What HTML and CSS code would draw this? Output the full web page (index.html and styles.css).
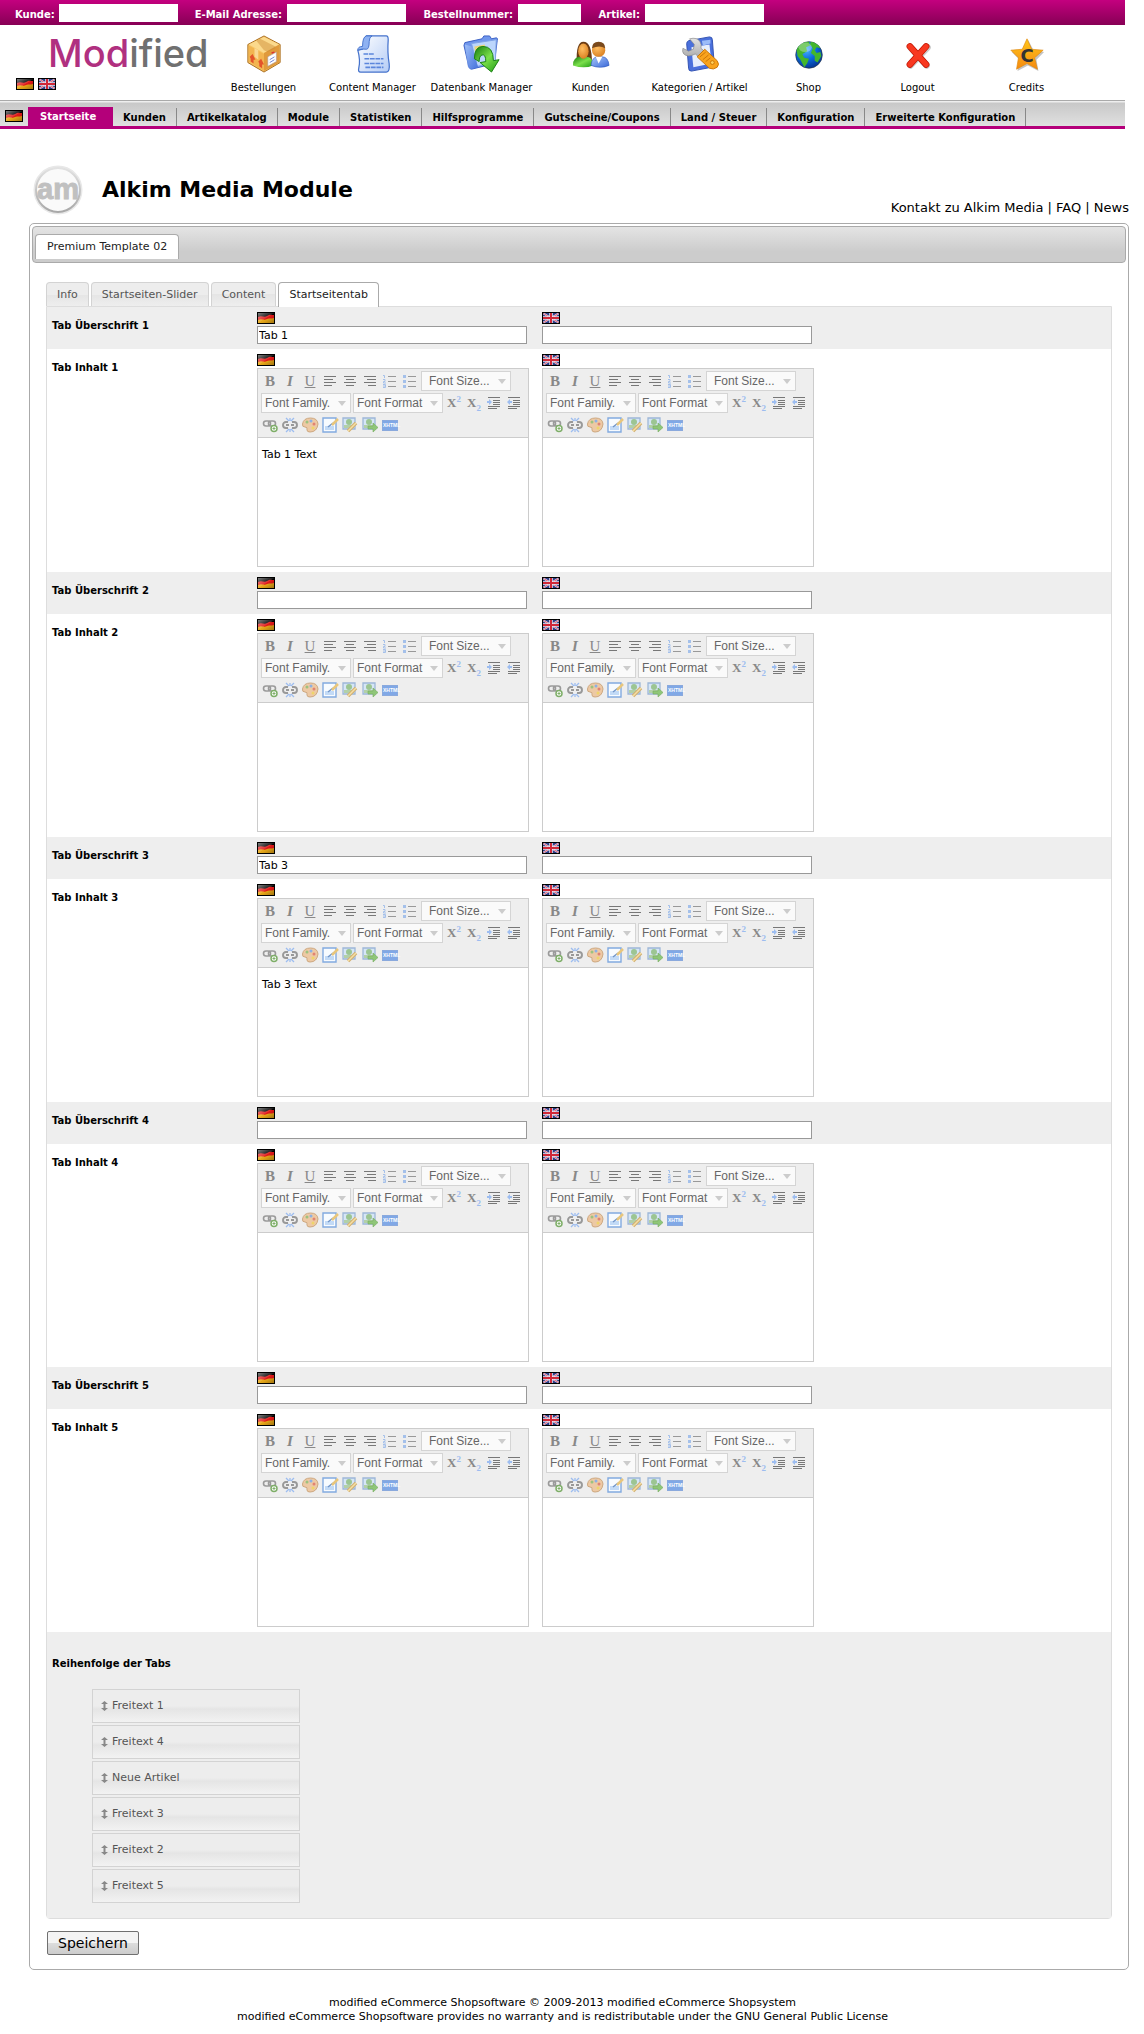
FILE: index.html
```html
<!DOCTYPE html>
<html lang="de">
<head>
<meta charset="utf-8">
<meta name="viewport" content="width=device-width, initial-scale=1">
<title>Alkim Media Module</title>
<link rel="stylesheet" href="styles.css">
</head>
<body>
<svg class="sprite" aria-hidden="true">
  <defs>
    <linearGradient id="gloss" x1="0" y1="0" x2="1" y2="1"><stop offset="0" stop-color="#fff" stop-opacity=".5"/><stop offset=".5" stop-color="#fff" stop-opacity=".1"/><stop offset=".55" stop-color="#000" stop-opacity="0"/><stop offset="1" stop-color="#000" stop-opacity=".3"/></linearGradient>
    <linearGradient id="blue" x1="0" y1="0" x2="1" y2="1"><stop offset="0" stop-color="#a9c8fa"/><stop offset="1" stop-color="#3a68d8"/></linearGradient>
    <linearGradient id="paper" x1="0" y1="0" x2="1" y2="1"><stop offset="0" stop-color="#fff"/><stop offset="1" stop-color="#b4ccf6"/></linearGradient>
    <linearGradient id="green" x1="0" y1="0" x2="1" y2="1"><stop offset="0" stop-color="#167a0c"/><stop offset=".5" stop-color="#7be04c"/><stop offset="1" stop-color="#1f9a14"/></linearGradient>
    <linearGradient id="gold" x1="0" y1="0" x2="0" y2="1"><stop offset="0" stop-color="#ffc61a"/><stop offset="1" stop-color="#f58a10"/></linearGradient>
    <radialGradient id="skin" cx=".4" cy=".35" r=".7"><stop offset="0" stop-color="#ffbe62"/><stop offset="1" stop-color="#d97f20"/></radialGradient>
    <radialGradient id="sea" cx=".4" cy=".3" r=".75"><stop offset="0" stop-color="#4db4ff"/><stop offset=".5" stop-color="#0a6adb"/><stop offset="1" stop-color="#06308e"/></radialGradient>
    <linearGradient id="red" x1="0" y1="0" x2="0" y2="1"><stop offset="0" stop-color="#ff6040"/><stop offset="1" stop-color="#d81400"/></linearGradient>
    <linearGradient id="silver" x1="0" y1="0" x2="0" y2="1"><stop offset="0" stop-color="#e2e2e2"/><stop offset="1" stop-color="#a8a8a8"/></linearGradient>
  </defs>
  <symbol id="flag-de" viewBox="0 0 18 12"><path fill="#000" d="M0 0h18v12H0z"/><path fill="#e01818" d="M1 5c4-2 6 1 9-1s4-1 7-1v5H1z"/><path fill="#e8a818" d="M1 8c4-2 6 1 9-1 3-1 4 0 7-1v5H1z"/><path fill="url(#gloss)" d="M1 1h16v10H1z"/></symbol>
  <symbol id="flag-gb" viewBox="0 0 18 12"><path fill="#000" d="M0 0h18v12H0z"/><path fill="#2c3c84" d="M1 1h16v10H1z"/><path stroke="#eef" stroke-width="2" d="M1.500 1.500l15 9M16.500 1.500l-15 9"/><path stroke="#d34" stroke-width=".8" d="M1.500 1.500l15 9M16.500 1.500l-15 9"/><path stroke="#e8e8f4" stroke-width="3.500" d="M9 1v10M1 6h16"/><path stroke="#d02838" stroke-width="2" d="M9 1v10M1 6h16"/></symbol>

  <symbol id="i-box" viewBox="0 0 38 40"><path fill="#f7c565" stroke="#a86a1c" d="M19 1l17 9v19L19 39 2 29V10z"/><path fill="#fbd98c" d="M19 2l16 8-16 9L3 10z"/><path fill="#e09a3c" d="M19 19l16-9v19L19 38z"/><path fill="#f2b450" d="M3 11l16 9v18L3 28z"/><path fill="#c98a34" d="M11 6l4-2 16 8v2l-8 4-4-2z" opacity=".45"/><path fill="#fbe0a4" d="M9 14l4 2v10l-4-3z" opacity=".8"/><path fill="#e4532a" d="M4 23l3-3 3 6H8v4l-3-2v-3zM13 28l3-3 3 6h-2v4l-3-2v-3z"/><path fill="#fff" stroke="#a99" stroke-width=".6" d="M23 23l9-5v10l-9 5z"/><path stroke="#6a7ed0" d="M25 26l5-3M25 29l5-3"/><path stroke="#d33" stroke-width="1.5" d="M27 19l3-1"/></symbol>
  <symbol id="i-doc" viewBox="0 0 38 40"><path fill="url(#paper)" stroke="#4472cc" stroke-width="1.3" d="M12 1h21q2 0 2 4-1 14 1 25 1 9-3 9H6q-3 0-2-4 2-8-1-19l5-1z"/><path fill="#8fb2f2" stroke="#4472cc" d="M12 1q-4 1-4 11-5 0-5 4 5-2 9-1 3 0 3-8 0-5 3-6z"/><g stroke="#5b86dc" stroke-width="1.8" stroke-dasharray="5 .8"><path d="M9 20h11M10 25h20M10 30h20M11 34h19"/></g></symbol>
  <symbol id="i-folder" viewBox="0 0 40 40"><path fill="#6f96ec" stroke="#3a5fc4" d="M2 8l18-4 2-3 6 0 2 3 5-1q2 0 1 3l-3 24-24 6q-2 0-3-3L1 11z"/><path fill="#bcd6fc" stroke="#7ea2e6" d="M9 9l26-4-1 24-19 4z"/><path fill="#e9d67c" d="M12 12l11-2v8l-10 2z"/><path fill="url(#blue)" opacity=".8" d="M2 10l7 2 7 22-8 2q-2 0-3-3z"/><path fill="url(#green)" stroke="#168010" d="M12 25q0-13 9-13 11 0 11 15l6-1-8 13-12-10 6-1q0-8-4-7-3 1-3 7z"/></symbol>
  <symbol id="i-users" viewBox="0 0 40 40"><path fill="#6b3c14" d="M5 29Q4 7 12 7q9 0 9 22z"/><path fill="url(#green)" d="M1 32q0-9 8-9h6q7 0 7 9-9 4-21 0z"/><ellipse cx="12" cy="17" rx="5.5" ry="8" fill="url(#skin)"/><path fill="url(#blue)" stroke="#2854b8" stroke-width=".6" d="M20 32q1-9 7-9h5q6 0 7 9-9 4-19 0z"/><path fill="#fff" d="M25 23l3 7 4-7z"/><circle cx="28" cy="16" r="7" fill="url(#skin)"/><path fill="#7a4a1c" d="M21 14q0-7 7-7t7 7q-6-4-14 0z"/></symbol>
  <symbol id="i-tools" viewBox="0 0 40 40"><path fill="#4a70dc" stroke="#3050b0" d="M8 6l22-4q3 0 3 3l2 26q0 3-3 3l-21 4q-3 0-3-3L6 9q0-2 2-3z"/><path fill="#e6eefc" d="M11 13l19-3 2 20-19 4z"/><path fill="#9cbcf8" d="M22 6l9-1v4l-8 2z"/><path fill="url(#silver)" stroke="#888" stroke-width=".7" d="M2 14l6 3 5-2 1-5-5-6q8-2 11 3 2 3 1 7l6 5-6 6-6-5q-8 4-12 0-2-2-1-6z"/><path fill="#f9a31c" stroke="#c87408" d="M17 23l8-8 13 12q3 4 0 7-4 3-8 1z"/><circle cx="33" cy="29" r="2" fill="#ffd05c" stroke="#c87408"/><path stroke="#c87408" d="M20 23l6-5M23 26l6-5M26 28l5-4"/></symbol>
  <symbol id="i-globe" viewBox="0 0 40 40"><circle cx="20" cy="21" r="14" fill="url(#sea)" stroke="#234" stroke-width=".7"/><path fill="#43b62c" d="M7 16q3-9 13-9l1 4-4 2 1 4-5 3 2 4 5 1-2 5-3 4-4-8-3-4zM22 7q7 1 10 7l-4-1-2 3 2 3 4-1 1 4-4 7-3-2v-5l-4-3 2-5-3-4z"/><ellipse cx="16" cy="13" rx="7" ry="5" fill="#fff" opacity=".3"/></symbol>
  <symbol id="i-cross" viewBox="0 0 40 40"><g fill="none" stroke-linecap="round" stroke-width="7"><path stroke="#999" opacity=".5" d="M12 13l17 19M30 13L12 32"/><path stroke="#c01400" d="M11.500 12l17 19M28.500 12l-17 19"/></g><path fill="none" stroke="#f83820" stroke-width="5.500" stroke-linecap="round" d="M11.500 12l17 19M28.500 12l-17 19"/></symbol>
  <symbol id="i-star" viewBox="0 0 40 40"><path fill="#555" opacity=".35" d="M21 5l6 11 11 2-8 8 2 12-11-6-11 6 2-12-8-8 11-2z"/><path fill="url(#gold)" stroke="#e08a10" stroke-width=".7" d="M20 4l5 11 12 1-9 8 3 12-11-6-11 6 2-12-8-8 12-1z"/></symbol>

  <symbol id="t-left" viewBox="0 0 20 20"><path stroke="#777" d="M4 5.500h12M4 8.500h9M4 11.500h12M4 14.500h8"/></symbol>
  <symbol id="t-center" viewBox="0 0 20 20"><path stroke="#777" d="M4 5.500h12M6 8.500h8M4 11.500h12M6 14.500h8"/></symbol>
  <symbol id="t-right" viewBox="0 0 20 20"><path stroke="#777" d="M4 5.500h12M7 8.500h9M4 11.500h12M8 14.500h8"/></symbol>
  <symbol id="t-ol" viewBox="0 0 20 20"><path stroke="#999" d="M8 5.500h8M8 10.500h8M8 15.500h8"/><path fill="none" stroke="#a4c0ea" d="M3 4.500h1.500V7M3 8.500h2v2H3.500v1.500H6M3 13.500h2.500v3H3M3 15h2"/></symbol>
  <symbol id="t-ul" viewBox="0 0 20 20"><path stroke="#999" d="M8 5.500h8M8 10.500h8M8 15.500h8"/><path fill="#a4c0ea" d="M3 4h3v3H3zM3 9h3v3H3zM3 14h3v3H3z"/></symbol>
  <symbol id="t-indent" viewBox="0 0 20 20"><path stroke="#777" d="M4 4.500h12M9 7.500h7M9 9.500h7M9 11.500h7M4 13.500h12M4 15.500h9"/><path fill="#9dbdf0" d="M3 8h2V6l3 3-3 3v-2H3z"/></symbol>
  <symbol id="t-outdent" viewBox="0 0 20 20"><path stroke="#777" d="M4 4.500h12M9 7.500h7M9 9.500h7M9 11.500h7M4 13.500h12M4 15.500h9"/><path fill="#9dbdf0" d="M8 8H6V6L3 9l3 3v-2h2z"/></symbol>
  <symbol id="t-link" viewBox="0 0 20 20"><g fill="none" stroke="#9a9a9a" stroke-width="1.600"><rect x="3.500" y="6" width="7" height="5" rx="2.500"/><rect x="8.500" y="6" width="7" height="5" rx="2.500"/></g><circle cx="14" cy="13.500" r="3" fill="#fff" stroke="#7eae68" stroke-width="1.500"/><path stroke="#7eae68" d="M12.500 13.500h3M14 12v3"/></symbol>
  <symbol id="t-unlink" viewBox="0 0 20 20"><path fill="none" stroke="#999" stroke-width="1.900" d="M8 7H6a3 3 0 0 0 0 6h2M12 13h2a3 3 0 0 0 0-6h-2M6 10h3M11 10h3"/><path stroke="#9dbdf0" stroke-width="1.300" d="M6 3l3 3M14 3l-3 3M10 3v3M6 17l3-3M14 17l-3-3M10 17v-3"/></symbol>
  <symbol id="t-palette" viewBox="0 0 20 20"><path fill="#edc9a4" stroke="#cda880" d="M2.500 9q1-6 8-6 7 0 7.500 6-1 8-8 8-3 0-3-2 1-3-2-3-3 0-2.500-3z"/><circle cx="7" cy="7" r="1.500" fill="#9cc27e"/><circle cx="11" cy="6" r="1.500" fill="#8db0e4"/><circle cx="14" cy="9" r="1.500" fill="#e18372"/><circle cx="13" cy="13" r="1.500" fill="#efd569"/></symbol>
  <symbol id="t-edit" viewBox="0 0 20 20"><path fill="#f7fbff" stroke="#82aae0" stroke-width="1.400" d="M3 3h13v14H3z"/><path fill="#c2daf6" d="M5 11h9v4H5z"/><path stroke="#6f94c8" stroke-width="1.500" d="M8 12l5-4"/><path stroke="#e8c67c" stroke-width="2.500" d="M12 10l6-6"/></symbol>
  <symbol id="t-image" viewBox="0 0 20 20"><path fill="#d6e6f6" stroke="#9db7d8" stroke-width="1.300" d="M3 3h12v11H3z"/><circle cx="9" cy="7" r="3" fill="#9cc592"/><path fill="#b2d0a8" d="M4 10h10v3H4z"/><path stroke="#d3b070" stroke-width="3.500" d="M8 16l8-8"/><path stroke="#f6dfa4" stroke-width="1.500" d="M8 16l8-8"/></symbol>
  <symbol id="t-insert" viewBox="0 0 20 20"><path fill="#d6e6f6" stroke="#9db7d8" stroke-width="1.300" d="M3 3h12v11H3z"/><circle cx="9" cy="7" r="3" fill="#9cc592"/><path fill="#b2d0a8" d="M4 10h10v3H4z"/><path fill="#8fc678" stroke="#76ac60" stroke-width=".6" d="M8 11h5V8l5 4.500-5 4.500v-3H8z"/></symbol>
  <symbol id="updown" viewBox="0 0 7 10"><path fill="#888" d="M3.500 0L7 3H4.500v4H7l-3.500 3L0 7h2.500V3H0z"/></symbol>
</svg>

<header class="site-header">
  <form class="search-bar">
    <label for="q-kunde">Kunde:</label><input id="q-kunde" type="text">
    <label for="q-mail">E-Mail Adresse:</label><input id="q-mail" type="text">
    <label for="q-order">Bestellnummer:</label><input id="q-order" type="text">
    <label for="q-item">Artikel:</label><input id="q-item" type="text">
  </form>
  <div class="brand-row">
    <div class="brand">
      <div class="logo"><span class="logo-accent">Mod</span>ified</div>
      <div class="languages">
        <a href="#" aria-label="Deutsch"><svg class="flag"><use href="#flag-de"/></svg></a>
        <a href="#" aria-label="English"><svg class="flag"><use href="#flag-gb"/></svg></a>
      </div>
    </div>
    <nav class="shortcuts">
      <a href="#"><svg><use href="#i-box"/></svg>Bestellungen</a>
      <a href="#"><svg><use href="#i-doc"/></svg>Content Manager</a>
      <a href="#"><svg><use href="#i-folder"/></svg>Datenbank Manager</a>
      <a href="#"><svg><use href="#i-users"/></svg>Kunden</a>
      <a href="#"><svg><use href="#i-tools"/></svg>Kategorien / Artikel</a>
      <a href="#"><svg><use href="#i-globe"/></svg>Shop</a>
      <a href="#"><svg><use href="#i-cross"/></svg>Logout</a>
      <a href="#"><svg viewBox="0 0 40 40"><use href="#i-star"/><text x="20" y="28" text-anchor="middle" class="star-letter">C</text></svg>Credits</a>
    </nav>
  </div>
  <nav class="main-nav">
    <svg class="flag"><use href="#flag-de"/></svg>
    <a href="#" class="active">Startseite</a>
    <a href="#">Kunden</a>
    <a href="#">Artikelkatalog</a>
    <a href="#">Module</a>
    <a href="#">Statistiken</a>
    <a href="#">Hilfsprogramme</a>
    <a href="#">Gutscheine/Coupons</a>
    <a href="#">Land / Steuer</a>
    <a href="#">Konfiguration</a>
    <a href="#">Erweiterte Konfiguration</a>
  </nav>
</header>

<main class="content">
  <div class="title-row">
    <svg class="am-logo" viewBox="0 0 50 50" aria-hidden="true"><circle cx="25" cy="25" r="23" fill="#fafafa" stroke="#e8e8e8" stroke-width="3"/><circle cx="25" cy="25" r="22" fill="none" stroke="url(#silver)" stroke-width="2"/><text x="25" y="34" text-anchor="middle" class="am-letters">am</text></svg>
    <h1>Alkim Media Module</h1>
    <p class="title-links"><a href="#">Kontakt zu Alkim Media</a> | <a href="#">FAQ</a> | <a href="#">News</a></p>
  </div>

  <section class="module">
    <div class="module-bar"><a href="#" class="module-tab">Premium Template 02</a></div>
    <form class="module-body">
      <nav class="tabs">
        <a href="#">Info</a>
        <a href="#">Startseiten-Slider</a>
        <a href="#">Content</a>
        <a href="#" class="active">Startseitentab</a>
      </nav>
      <div class="panel">
        <div id="rows"></div>
        <div class="order">
          <h2>Reihenfolge der Tabs</h2>
          <ul>
            <li><svg><use href="#updown"/></svg>Freitext 1</li>
            <li><svg><use href="#updown"/></svg>Freitext 4</li>
            <li><svg><use href="#updown"/></svg>Neue Artikel</li>
            <li><svg><use href="#updown"/></svg>Freitext 3</li>
            <li><svg><use href="#updown"/></svg>Freitext 2</li>
            <li><svg><use href="#updown"/></svg>Freitext 5</li>
          </ul>
        </div>
      </div>
      <button type="submit" class="save">Speichern</button>
    </form>
  </section>
</main>

<footer class="site-footer">
  <p>modified eCommerce Shopsoftware © 2009-2013 modified eCommerce Shopsystem</p>
  <p>modified eCommerce Shopsoftware provides no warranty and is redistributable under the GNU General Public License</p>
</footer>

<template id="row-template">
  <div class="row row-title">
    <span class="row-label"></span>
    <div class="field"><label><svg class="flag"><use href="#flag-de"/></svg></label><input type="text"></div>
    <div class="field"><label><svg class="flag"><use href="#flag-gb"/></svg></label><input type="text"></div>
  </div>
  <div class="row row-text">
    <span class="row-label"></span>
    <div class="field"><label><svg class="flag"><use href="#flag-de"/></svg></label><div class="editor"></div></div>
    <div class="field"><label><svg class="flag"><use href="#flag-gb"/></svg></label><div class="editor"></div></div>
  </div>
</template>

<template id="editor-template">
  <div class="toolbar">
    <button type="button" class="glyph bold" aria-label="Fett">B</button>
    <button type="button" class="glyph italic" aria-label="Kursiv">I</button>
    <button type="button" class="glyph underline" aria-label="Unterstrichen">U</button>
    <button type="button" aria-label="Links"><svg><use href="#t-left"/></svg></button>
    <button type="button" aria-label="Zentriert"><svg><use href="#t-center"/></svg></button>
    <button type="button" aria-label="Rechts"><svg><use href="#t-right"/></svg></button>
    <button type="button" aria-label="Nummerierung"><svg><use href="#t-ol"/></svg></button>
    <button type="button" aria-label="Aufzählung"><svg><use href="#t-ul"/></svg></button>
    <select class="size" aria-label="Font Size"><option>Font Size...</option></select>
    <select aria-label="Font Family"><option>Font Family.</option></select>
    <select aria-label="Font Format"><option>Font Format</option></select>
    <button type="button" class="glyph script" aria-label="Hochgestellt">X<sup>2</sup></button>
    <button type="button" class="glyph script" aria-label="Tiefgestellt">X<sub>2</sub></button>
    <button type="button" aria-label="Einzug vergrößern"><svg><use href="#t-indent"/></svg></button>
    <button type="button" aria-label="Einzug verkleinern"><svg><use href="#t-outdent"/></svg></button>
    <button type="button" aria-label="Link"><svg><use href="#t-link"/></svg></button>
    <button type="button" aria-label="Link entfernen"><svg><use href="#t-unlink"/></svg></button>
    <button type="button" aria-label="Farbe"><svg><use href="#t-palette"/></svg></button>
    <button type="button" aria-label="Bearbeiten"><svg><use href="#t-edit"/></svg></button>
    <button type="button" aria-label="Bild bearbeiten"><svg><use href="#t-image"/></svg></button>
    <button type="button" aria-label="Bild einfügen"><svg><use href="#t-insert"/></svg></button>
    <button type="button" class="html-button"><span>XHTML</span></button>
  </div>
  <textarea></textarea>
</template>
<script src="script.js"></script>
</body>
</html>
```
FILE: script.js
```js
// Content of the five tabs; the English fields are still empty.
const tabs = [
  { title: 'Tab 1', text: 'Tab 1 Text' },
  { title: '', text: '' },
  { title: 'Tab 3', text: 'Tab 3 Text' },
  { title: '', text: '' },
  { title: '', text: '' }
];
const languages = ['de', 'en'];
const rows = document.getElementById('rows');
const rowTemplate = document.getElementById('row-template');
const editorTemplate = document.getElementById('editor-template');

tabs.forEach((tab, index) => {
  const number = index + 1;
  const row = rowTemplate.content.cloneNode(true);
  row.querySelectorAll('.editor').forEach((editor) => {
    editor.append(editorTemplate.content.cloneNode(true));
  });
  const names = row.querySelectorAll('.row-label');
  names[0].textContent = 'Tab Überschrift ' + number;
  names[1].textContent = 'Tab Inhalt ' + number;
  row.querySelectorAll('.field').forEach((field, position) => {
    const control = field.querySelector('input, textarea');
    const kind = control.tagName === 'INPUT' ? 'title' : 'text';
    const language = languages[position % 2];
    control.id = kind + '-' + number + '-' + language;
    field.querySelector('label').htmlFor = control.id;
    control.setAttribute('aria-label', names[kind === 'title' ? 0 : 1].textContent + ' ' + language);
    if (language === 'de') control.value = tab[kind];
  });
  rows.append(row);
});
```
FILE: styles.css
```css
* { box-sizing: border-box; }
body {
  margin: 0;
  background: #fff;
  color: #000;
  font: 10px/14px Verdana, "DejaVu Sans", sans-serif;
}
a { color: inherit; text-decoration: none; }
h1, h2, p, ul { margin: 0; padding: 0; }
input, button, select, textarea { font: inherit; color: inherit; margin: 0; border-radius: 0; }
.sprite { position: absolute; width: 0; height: 0; }
.flag { display: block; width: 18px; height: 12px; }

/* Header */
.site-header { margin-right: 19px; }
.search-bar {
  display: grid;
  grid-template-columns: 39px 119px 99px 119px 102px 63px 54px 119px;
  column-gap: 5px;
  align-items: center;
  height: 25px;
  padding-left: 15px;
  background: linear-gradient(#c4007f, #870055);
  color: #fff;
  font-weight: bold;
  white-space: nowrap;
}
.search-bar label { padding-top: 4px; text-align: right; }
.search-bar input { width: 100%; height: 18px; margin-top: 1px; padding: 0 2px; border: 0; background: #fff; color: #000; }
.brand-row { display: flex; height: 75px; }
.brand { flex: none; width: 209px; padding: 8px 0 0 16px; }
.logo { padding-left: 32px; height: 45px; color: #707070; font: 500 38px/40px Inter, sans-serif; }
.logo-accent { color: #b03080; }
.languages { display: flex; gap: 4px; }
.shortcuts { display: flex; width: 872px; }
.shortcuts a { flex: 1; display: flex; flex-direction: column; align-items: center; padding-top: 10px; white-space: nowrap; }
.shortcuts svg { width: 38px; height: 38px; margin-bottom: 8px; }
.star-letter { font: bold 19px "DejaVu Sans", sans-serif; fill: #333; }
.main-nav {
  display: flex;
  align-items: flex-end;
  height: 29px;
  padding-left: 5px;
  border-top: 1px solid #aaa;
  border-bottom: 3px solid #b4007a;
  background: linear-gradient(#eee 0 1px, #c8c8c8 2px, #e0e0e0);
  font-weight: bold;
}
.main-nav .flag { margin: 0 5px 4px 0; }
.main-nav a { height: 18px; padding: 3px 10px 0; border-right: 1px solid #888; white-space: nowrap; }
.main-nav .active { width: 85px; height: 19px; padding: 3px 0 0 12px; border: 0; background: #b4007a; color: #fff; }

/* Page title */
.content { margin: 35px 15px 0 29px; }
.title-row { display: flex; align-items: center; height: 59px; padding-left: 4px; }
.am-logo { width: 50px; height: 50px; margin-bottom: 8px; }
.am-letters { font: bold 29px "Liberation Sans", sans-serif; fill: #c0c0c0; stroke: #c0c0c0; stroke-width: 1px; }
h1 { flex: 1; padding-left: 19px; margin-bottom: 8px; font-size: 22px; line-height: 26px; }
.title-links { align-self: flex-end; padding-bottom: 6px; font-size: 13px; line-height: 18px; }

/* Module box */
.module { padding: 2px; border: 1px solid #aaa; border-radius: 5px; }
.module-bar { display: flex; height: 37px; padding: 7px 2px 3px; border: 1px solid #aaa; border-radius: 4px; background: linear-gradient(#e4e4e4, #ccc 70%, #ccc); }
.module-tab { padding: 5px 11px; border: 1px solid #aaa; border-bottom: 0; border-radius: 4px 4px 0 0; background: #fff; color: #222; font-size: 11px; }
.module-body { padding: 19px 14px 12px; }
.tabs { display: flex; gap: 2px; font-size: 11px; }
.tabs a { height: 24px; padding: 5px 10px 0; border: 1px solid #d3d3d3; border-bottom: 0; border-radius: 4px 4px 0 0; background: linear-gradient(#ededed 50%, #e5e5e5 50%, #eee); color: #555; }
.tabs .active { height: 25px; margin-bottom: -1px; border-color: #aaa; background: #fff; color: #222; }
.panel { border: 1px solid #ddd; border-radius: 0 0 4px 4px; }
.row { display: grid; grid-template-columns: 190px 270px 270px; column-gap: 15px; padding: 5px; }
.row-title { height: 42px; background: #eee; }
.row-label { padding-top: 7px; font-weight: bold; }
.field label { display: block; width: 18px; margin-bottom: 2px; }
.field input { display: block; width: 100%; height: 18px; padding: 0 1px; border: 1px solid #999; background: #fff; font-size: 11px; }
.editor { width: 272px; border: 1px solid #ccc; }
.toolbar { display: flex; flex-wrap: wrap; row-gap: 2px; padding: 2px; border-bottom: 1px solid #ccc; background: #eee; }
.toolbar button { display: block; width: 20px; height: 20px; padding: 0; border: 0; background: none; }
.toolbar svg { display: block; width: 20px; height: 20px; }
.toolbar .glyph { color: #888; font: 15px/20px "Liberation Serif", serif; }
.toolbar .bold { font-weight: bold; }
.toolbar .italic { font-style: italic; font-weight: bold; }
.toolbar .underline { text-decoration: underline; }
.toolbar .script { font-size: 13px; font-weight: bold; }
.toolbar sup, .toolbar sub { color: #9dbdf0; font-size: 9px; line-height: 0; }
.toolbar select {
  width: 90px;
  height: 20px;
  margin: 0 1px;
  padding: 0 3px;
  border: 1px solid #d4d4d4;
  appearance: none;
  background: #fafafa url("data:image/svg+xml,%3Csvg xmlns='http://www.w3.org/2000/svg' width='8' height='5'%3E%3Cpath fill='%23ccc' d='M0 0h8L4 5z'/%3E%3C/svg%3E") no-repeat right 4px center;
  color: #666;
  font: 12px/16px "Liberation Sans", Arial, sans-serif;
}
.toolbar .size { padding-left: 7px; }
.toolbar .html-button { padding: 0 2px; }
.html-button span { display: block; height: 11px; border: 1px solid #8aa9dd; background: #80a8e6; color: #fff; font: bold 5px/9px "Liberation Sans", sans-serif; text-align: center; }
.editor textarea { display: block; width: 100%; height: 128px; padding: 10px 4px; border: 0; outline: 0; resize: none; background: #fff; font-size: 11px; }

/* Tab order */
.order { padding: 25px 5px 15px; background: #eee; }
h2 { font-size: 10px; line-height: 14px; }
.order ul { display: grid; gap: 2px; width: 208px; margin: 18px 0 0 40px; list-style: none; font-size: 11px; }
.order li { display: flex; align-items: center; gap: 4px; height: 34px; padding-left: 8px; border: 1px solid #d3d3d3; background: linear-gradient(#ededed 50%, #e5e5e5 60%, #f2f2f2); color: #555; }
.order li svg { width: 7px; height: 10px; }
.save { display: block; height: 24px; margin: 12px 0 0 1px; padding: 0 10px; border: 1px solid #707070; border-radius: 2px; background: linear-gradient(#f4f4f4 50%, #ddd 50%, #ccc); font-size: 14px; line-height: 20px; }

.site-footer { margin: 26px 19px 0 0; padding-bottom: 10px; font-size: 11px; text-align: center; }
```
